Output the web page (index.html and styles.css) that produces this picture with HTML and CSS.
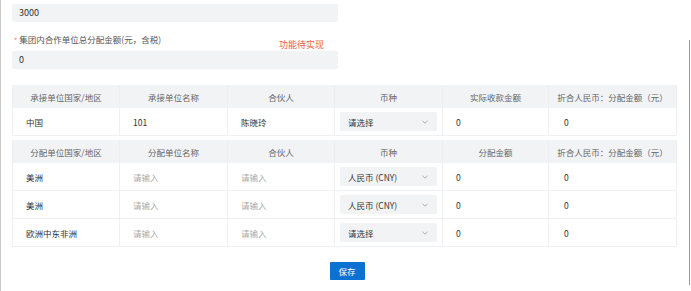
FILE: index.html
```html
<!DOCTYPE html>
<html lang="zh">
<head>
<meta charset="utf-8">
<link rel="stylesheet" href="styles.css">
</head>
<body>
<div class="frame">
  <div class="page">
    <div class="field-input">3000</div>
    <div class="label-row">
      <span class="label"><span class="req">*</span>集团内合作单位总分配金额(元，含税)</span>
      <span class="todo">功能待实现</span>
    </div>
    <div class="field-input">0</div>

    <div class="table t1">
      <div class="row head">
        <div class="cell">承接单位国家/地区</div>
        <div class="cell">承接单位名称</div>
        <div class="cell">合伙人</div>
        <div class="cell">币种</div>
        <div class="cell">实际收款金额</div>
        <div class="cell">折合人民币：分配金额（元）</div>
      </div>
      <div class="row body">
        <div class="cell">中国</div>
        <div class="cell">101</div>
        <div class="cell">陈晓玲</div>
        <div class="cell sel-cell"><div class="select"><span>请选择</span><svg class="chev" width="6" height="4" viewBox="0 0 6 4"><path d="M0.5 0.8 L3 3.2 L5.5 0.8" fill="none" stroke="#9a9a9a" stroke-width="0.8"/></svg></div></div>
        <div class="cell num">0</div>
        <div class="cell num2">0</div>
      </div>
    </div>

    <div class="table t2">
      <div class="row head">
        <div class="cell">分配单位国家/地区</div>
        <div class="cell">分配单位名称</div>
        <div class="cell">合伙人</div>
        <div class="cell">币种</div>
        <div class="cell">分配金额</div>
        <div class="cell">折合人民币：分配金额（元）</div>
      </div>
      <div class="row body">
        <div class="cell">美洲</div>
        <div class="cell ph">请输入</div>
        <div class="cell ph">请输入</div>
        <div class="cell sel-cell"><div class="select"><span>人民币 (CNY)</span><svg class="chev" width="6" height="4" viewBox="0 0 6 4"><path d="M0.5 0.8 L3 3.2 L5.5 0.8" fill="none" stroke="#9a9a9a" stroke-width="0.8"/></svg></div></div>
        <div class="cell num">0</div>
        <div class="cell num2">0</div>
      </div>
      <div class="row body">
        <div class="cell">美洲</div>
        <div class="cell ph">请输入</div>
        <div class="cell ph">请输入</div>
        <div class="cell sel-cell"><div class="select"><span>人民币 (CNY)</span><svg class="chev" width="6" height="4" viewBox="0 0 6 4"><path d="M0.5 0.8 L3 3.2 L5.5 0.8" fill="none" stroke="#9a9a9a" stroke-width="0.8"/></svg></div></div>
        <div class="cell num">0</div>
        <div class="cell num2">0</div>
      </div>
      <div class="row body">
        <div class="cell">欧洲中东非洲</div>
        <div class="cell ph">请输入</div>
        <div class="cell ph">请输入</div>
        <div class="cell sel-cell"><div class="select"><span>请选择</span><svg class="chev" width="6" height="4" viewBox="0 0 6 4"><path d="M0.5 0.8 L3 3.2 L5.5 0.8" fill="none" stroke="#9a9a9a" stroke-width="0.8"/></svg></div></div>
        <div class="cell num">0</div>
        <div class="cell num2">0</div>
      </div>
    </div>

    <div class="actions">
      <button class="btn">保存</button>
    </div>
  </div>
  <div class="scrollbar"></div>
</div>
</body>
</html>
```

FILE: styles.css
```css
* { box-sizing: border-box; }
html, body {
  margin: 0;
  padding: 0;
  background: #fff;
}
body {
  font-family: "Noto Sans CJK SC", "Noto Sans", sans-serif;
  font-size: 8.5px;
  color: #333;
}
.frame {
  position: relative;
  width: 691px;
  height: 291px;
  border-left: 1px solid #c9c9c9;
  overflow: hidden;
}
.page {
  padding: 4px 0 0 11px;
  width: 676px;
}
.field-input {
  width: 326px;
  height: 18px;
  background: #f2f3f5;
  border-radius: 2px;
  padding-left: 7px;
  font-size: 9px;
  line-height: 18px;
  color: #333;
}
.label-row {
  display: flex;
  height: 19px;
  margin-top: 10px;
}
.label {
  line-height: 14px;
  color: #555;
  padding-left: 2px;
}
.req {
  color: #f56c6c;
  font-size: 7px;
  margin-right: 2px;
}
.todo {
  align-self: flex-end;
  margin-left: 118px;
  color: #f25a4e;
  font-size: 9px;
  line-height: 12px;
}
.table {
  width: 664px;
  border-left: 1px solid #eef0f3;
}
.t1 { margin-top: 16px; }
.t2 { margin-top: 4px; }
.row {
  display: grid;
  grid-template-columns: 107px 108px 107px 108px 106px 128px;
}
.head {
  height: 23px;
  background: #f2f3f5;
}
.head .cell {
  justify-content: center;
  color: #666;
  border-right: 1px solid #eceef1;
}
.body {
  height: 28px;
  border-bottom: 1px solid #eef0f3;
}
.body .cell {
  padding-left: 13px;
  border-right: 1px solid #eef0f3;
}
.cell {
  display: flex;
  align-items: center;
  white-space: nowrap;
  overflow: hidden;
}
.ph { color: #aaa; }
.num { padding-left: 12px; }
.body .num2 { padding-left: 15px; }
.body .sel-cell { padding-left: 5px; padding-right: 5px; }
.select {
  width: 97px;
  height: 19px;
  background: #f2f3f5;
  border-radius: 2px;
  display: flex;
  align-items: center;
  justify-content: space-between;
  padding: 0 9px 0 8px;
  color: #333;
}
.chev { display: block; }
.actions {
  display: flex;
  justify-content: center;
  margin-top: 15px;
  padding-left: 5px;
}
.btn {
  width: 35px;
  height: 18px;
  border: none;
  border-radius: 1px;
  background: #0b72d3;
  color: #fff;
  font-family: "Noto Sans CJK SC", "Noto Sans", sans-serif;
  font-size: 8.5px;
  padding: 0;
}
.scrollbar {
  position: absolute;
  right: 1px;
  top: 40px;
  width: 1px;
  height: 245px;
  background: #9a9a9a;
}
```
